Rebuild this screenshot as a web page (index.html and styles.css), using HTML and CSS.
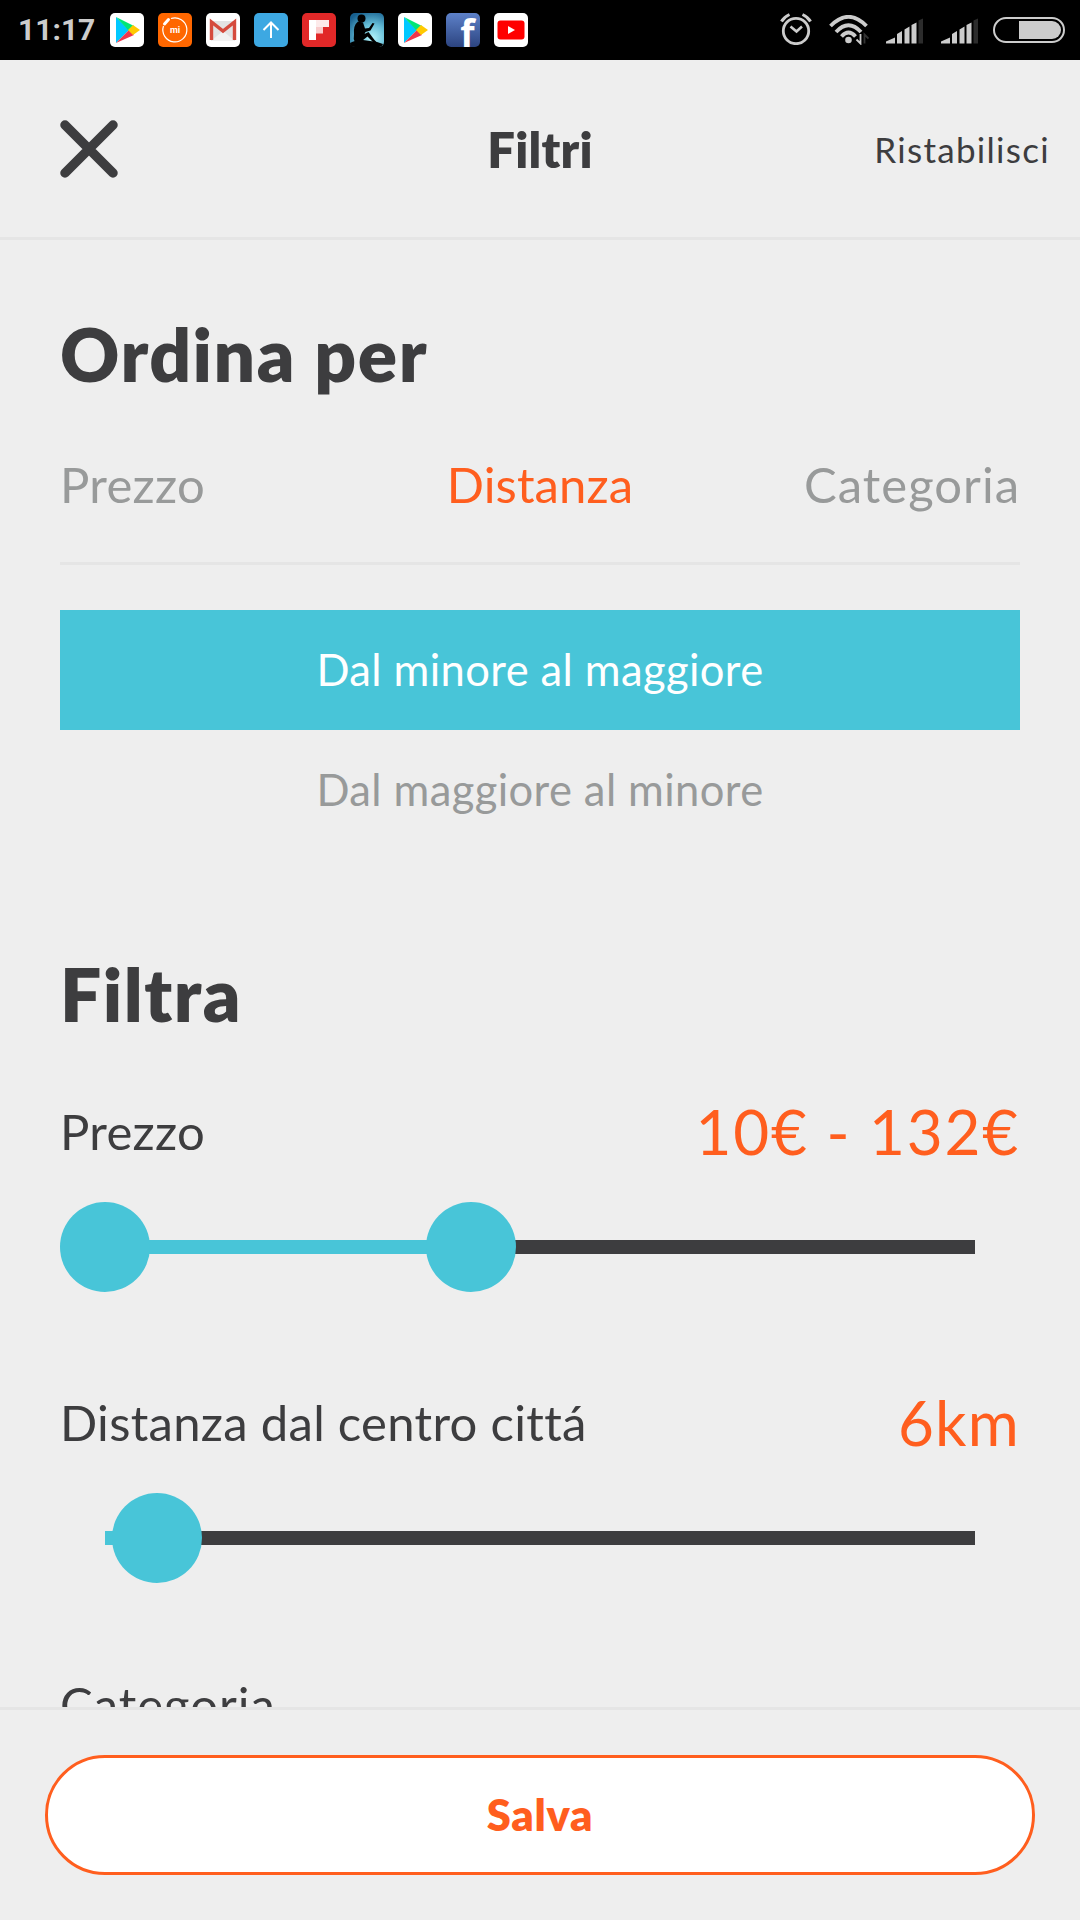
FILE: index.html
```html
<!DOCTYPE html>
<html lang="it">
<head>
  <meta charset="UTF-8">
  <title>Filtri</title>
  <link rel="stylesheet" href="styles.css">
</head>
<body>
  <div class="statusbar">
    <span class="clock">11:17</span>
    <div class="apps">
      <svg class="app" viewBox="0 0 34 34">
        <rect width="34" height="34" rx="5" fill="#fff"/>
        <path d="M6 4v26l13-13z" fill="#00c8ff"/>
        <path d="M6 4l18 9-5 5z" fill="#00e676"/>
        <path d="M6 30l18-8-5-5z" fill="#f0364b"/>
        <path d="M23 12l7 5-7 5-5-5z" fill="#ffc900"/>
      </svg>
      <svg class="app" viewBox="0 0 34 34">
        <rect width="34" height="34" rx="5" fill="#ff6700"/>
        <path d="M13 5.500A12 12 0 1 1 5.500 13" fill="none" stroke="#fff" stroke-width="1.200"/>
        <path d="M6.500 11l4-4.500" stroke="#fff" stroke-width="3" stroke-linecap="round"/>
        <text class="mi" x="17" y="20">mi</text>
      </svg>
      <svg class="app" viewBox="0 0 34 34">
        <rect width="34" height="34" rx="5" fill="#fff"/>
        <path d="M5 8h24v20H5z" fill="#e3e3e3"/>
        <path d="M5 28l12-10 12 10z" fill="#f2f2f2"/>
        <path d="M5.500 27V9L17 18 28.500 9v18" fill="none" stroke="#d54b3d" stroke-width="3.400"/>
      </svg>
      <svg class="app" viewBox="0 0 34 34">
        <rect width="34" height="34" rx="5" fill="#3da8e2"/>
        <path d="M17 25V10M9.500 17L17 9.500l7.500 7.500" fill="none" stroke="#fff" stroke-width="2"/>
      </svg>
      <svg class="app" viewBox="0 0 34 34">
        <rect width="34" height="34" rx="5" fill="#e12828"/>
        <rect x="7" y="7" width="7" height="20" fill="#fff"/>
        <rect x="14" y="7" width="13" height="7" fill="#fdeaea"/>
        <rect x="14" y="14" width="7" height="6.500" fill="#f9cccc"/>
      </svg>
      <svg class="app" viewBox="0 0 34 34">
        <defs>
          <radialGradient id="sky" cx="0.65" cy="0.75" r="0.85">
            <stop offset="0" stop-color="#b5f4fb"/>
            <stop offset="0.500" stop-color="#64bcd6"/>
            <stop offset="1" stop-color="#17608f"/>
          </radialGradient>
        </defs>
        <rect width="34" height="34" rx="5" fill="url(#sky)"/>
        <path d="M0 30q5-3 13-3l14 2 6 2q-1 3-4 3H5q-5 0-5-4z" fill="#000"/>
        <circle cx="11.500" cy="5.500" r="4" fill="#000"/>
        <path d="M8 8.500l5 1 2 6 4-.5 3.500-5 2 .5-4 7-5 1.500-1 2 4-2 6 8 3 3-3 .5-7-7-5 4-1 2H5q-2-4-1-8-1-9 4-13z" fill="#000"/>
      </svg>
      <svg class="app" viewBox="0 0 34 34">
        <rect width="34" height="34" rx="5" fill="#fff"/>
        <path d="M6 4v26l13-13z" fill="#00c8ff"/>
        <path d="M6 4l18 9-5 5z" fill="#00e676"/>
        <path d="M6 30l18-8-5-5z" fill="#f0364b"/>
        <path d="M23 12l7 5-7 5-5-5z" fill="#ffc900"/>
      </svg>
      <svg class="app" viewBox="0 0 34 34">
        <defs>
          <linearGradient id="fb" x1="0" y1="0" x2="0" y2="1">
            <stop offset="0" stop-color="#5d81c9"/>
            <stop offset="1" stop-color="#2c4480"/>
          </linearGradient>
        </defs>
        <rect width="34" height="34" rx="5" fill="url(#fb)"/>
        <text class="fb" x="21.500" y="34">f</text>
      </svg>
      <svg class="app" viewBox="0 0 34 34">
        <rect width="34" height="34" rx="5" fill="#fff"/>
        <rect x="3.500" y="7.500" width="27" height="19" rx="3" fill="#f00"/>
        <path d="M14 13v8l7-4z" fill="#fff"/>
      </svg>
    </div>
    <div class="system">
      <svg class="alarm" width="32" height="32" viewBox="0 0 32 32">
        <circle cx="16" cy="18" r="12.700" fill="none" stroke="#ccc" stroke-width="2.800"/>
        <path d="M10.500 13.500l6 5 5.500-5" fill="none" stroke="#ccc" stroke-width="2.600"/>
        <path d="M1.500 8.500Q4 4 9.500 1.500M30.500 8.500Q28 4 22.500 1.500" fill="none" stroke="#ccc" stroke-width="3"/>
      </svg>
      <svg class="wifi" width="40" height="30" viewBox="0 0 40 30">
        <path d="M1.500 11Q19.500-7.500 37.500 11" fill="none" stroke="#ccc" stroke-width="3.800"/>
        <path d="M7 17Q19.500 3.500 32 17" fill="none" stroke="#ccc" stroke-width="3.800"/>
        <path d="M12.500 21.500Q19.500 13.500 26.500 21.500" fill="none" stroke="#ccc" stroke-width="3.800"/>
        <circle cx="19.500" cy="25" r="3.300" fill="#ccc"/>
        <path d="M31.500 19v9.500l-4-4" fill="none" stroke="#ccc" stroke-width="1.800"/>
        <path d="M35.500 28.500V19.500l4 4" fill="none" stroke="#333" stroke-width="1.800"/>
      </svg>
      <svg class="signal" width="37" height="26" viewBox="0 0 37 26">
        <path d="M0 25.500v-2l9-4v6zM11 16l5-3v12.500h-5zM18.500 11.500l5-3v17h-5zM25.500 7l5-2.500v21h-5z" fill="#ccc"/>
        <path d="M32.500 2.500l4.500-2v25h-4.500z" fill="#2c2c2c"/>
      </svg>
      <svg class="signal" width="37" height="26" viewBox="0 0 37 26">
        <path d="M0 25.500v-2l9-4v6zM11 16l5-3v12.500h-5zM18.500 11.500l5-3v17h-5zM25.500 7l5-2.500v21h-5z" fill="#ccc"/>
        <path d="M32.500 2.500l4.500-2v25h-4.500z" fill="#2c2c2c"/>
      </svg>
      <svg class="battery" width="72" height="26" viewBox="0 0 72 26">
        <rect x="1" y="1" width="70" height="24" rx="12" fill="none" stroke="#ccc" stroke-width="2"/>
        <path d="M26 4h33a9 9 0 0 1 0 18H26z" fill="#ccc"/>
      </svg>
    </div>
  </div>

  <header class="header">
    <button class="close">
      <svg width="58" height="58" viewBox="0 0 58 58">
        <path d="M5 5l48 48M53 5l-48 48" stroke="#3d3d3f" stroke-width="9.500" stroke-linecap="round"/>
      </svg>
    </button>
    <h1 class="title">Filtri</h1>
    <button class="reset">Ristabilisci</button>
  </header>

  <main class="content">
    <section class="sort">
      <h2>Ordina per</h2>
      <div class="tabs">
        <span class="tab">Prezzo</span>
        <span class="tab active">Distanza</span>
        <span class="tab tab-category">Categoria</span>
      </div>
      <div class="order selected">Dal minore al maggiore</div>
      <div class="order">Dal maggiore al minore</div>
    </section>

    <section class="filter">
      <h2>Filtra</h2>
      <div class="row">
        <span class="label">Prezzo</span>
        <span class="value">10€ - 132€</span>
      </div>
      <div class="slider">
        <div class="track"><div class="range" style="width: 42%"></div></div>
        <div class="knob" style="left: 0"></div>
        <div class="knob" style="left: 366px"></div>
      </div>
      <div class="row">
        <span class="label">Distanza dal centro cittá</span>
        <span class="value value-km">6km</span>
      </div>
      <div class="slider">
        <div class="track"><div class="range" style="width: 6%"></div></div>
        <div class="knob" style="left: 52px"></div>
      </div>
      <div class="row row-category">
        <span class="label label-category">Categoria</span>
      </div>
    </section>
  </main>

  <footer class="footer">
    <button class="save">Salva</button>
  </footer>
</body>
</html>
```

FILE: styles.css
```css
* {
  box-sizing: border-box;
}
body {
  margin: 0;
  height: 1920px;
  display: flex;
  flex-direction: column;
  overflow: hidden;
  background-color: #eeeeee;
  color: #3d3d3f;
  font-family: Lato, "Open Sans", sans-serif;
  font-variant-ligatures: none;
}
h1, h2 {
  margin: 0;
}
button {
  border: none;
  background: none;
  padding: 0;
  color: inherit;
  font-family: inherit;
}
svg {
  display: block;
}

/* Status bar */
.statusbar {
  height: 60px;
  flex: none;
  display: flex;
  align-items: center;
  background-color: #000;
  padding: 0 15px 0 18px;
}
.clock {
  width: 92px;
  color: #ccc;
  font: 700 30px/60px Roboto, sans-serif;
}
.apps {
  display: flex;
  gap: 14px;
}
.app {
  width: 34px;
  height: 34px;
  overflow: visible;
}
.mi {
  fill: #fff;
  font: 700 9px Roboto, sans-serif;
  text-anchor: middle;
}
.fb {
  fill: #fff;
  font: 700 37px "Open Sans", sans-serif;
  text-anchor: middle;
}
.system {
  margin-left: auto;
  display: flex;
  align-items: center;
}
.alarm {
  margin: -2px 17px 0 0;
}
.wifi {
  margin-right: 17px;
}
.signal {
  margin: 2px 18px 0 0;
}
.signal + .battery {
  margin-left: -3px;
}

/* Header */
.header {
  height: 180px;
  flex: none;
  display: grid;
  grid-template-columns: 1fr auto 1fr;
  align-items: center;
  padding: 1px 30px 0;
  border-bottom: 3px solid #e5e5e5;
}
.close {
  margin-left: 30px;
  justify-self: start;
}
.title {
  font-size: 49px;
  font-weight: 800;
  line-height: 60px;
  letter-spacing: 0.2px;
}
.reset {
  justify-self: end;
  font-size: 35px;
  line-height: 42px;
  letter-spacing: 1.3px;
}

/* Content */
.content {
  flex: 1;
  min-height: 0;
  overflow: hidden;
  padding: 0 60px;
}
h2 {
  font-size: 73px;
  font-weight: 800;
  line-height: 88px;
  letter-spacing: 1.5px;
  padding-top: 70px;
}
.tabs {
  display: grid;
  grid-template-columns: 1fr auto 1fr;
  margin-top: 26px;
  height: 141px;
  padding-top: 30px;
  border-bottom: 3px solid #e5e5e5;
  color: #989a9a;
}
.tab {
  font-size: 49px;
  line-height: 60px;
  letter-spacing: 0.3px;
}
.tab-category {
  letter-spacing: 1px;
  text-align: right;
}
.active {
  color: #ff5e1e;
  letter-spacing: 0.1px;
}
.order {
  height: 120px;
  line-height: 118px;
  text-align: center;
  font-size: 43.5px;
  letter-spacing: 0.4px;
  color: #989a9a;
}
.selected {
  margin-top: 45px;
  background-color: #48c5d8;
  color: #fff;
}
.filter {
  padding-top: 30px;
}
.row {
  display: flex;
  justify-content: space-between;
  align-items: center;
  height: 80px;
  margin: 53px 0 31px;
}
.label {
  font-size: 49px;
  letter-spacing: 0.3px;
}
.label-category {
  letter-spacing: 1px;
}
.value {
  font-size: 62px;
  letter-spacing: 1.8px;
  color: #ff5e1e;
}
.value-km {
  letter-spacing: 1.2px;
}

/* Sliders */
.slider {
  position: relative;
  height: 90px;
  padding: 38px 45px;
}
.slider + .row {
  margin-top: 90px;
}
.slider + .row-category {
  margin-top: 81px;
}
.track {
  height: 14px;
  background-color: #3d3d3f;
}
.range {
  height: 14px;
  background-color: #48c5d8;
}
.knob {
  position: absolute;
  top: 0;
  width: 90px;
  height: 90px;
  border-radius: 50%;
  background-color: #48c5d8;
}

/* Footer */
.footer {
  height: 213px;
  flex: none;
  padding: 45px;
  border-top: 3px solid #e5e5e5;
}
.save {
  width: 100%;
  height: 120px;
  border: 3px solid #ff5e1e;
  border-radius: 60px;
  background-color: #fff;
  color: #ff5e1e;
  font-size: 43.5px;
  font-weight: 800;
  letter-spacing: 0.7px;
  padding-bottom: 2px;
}
```
